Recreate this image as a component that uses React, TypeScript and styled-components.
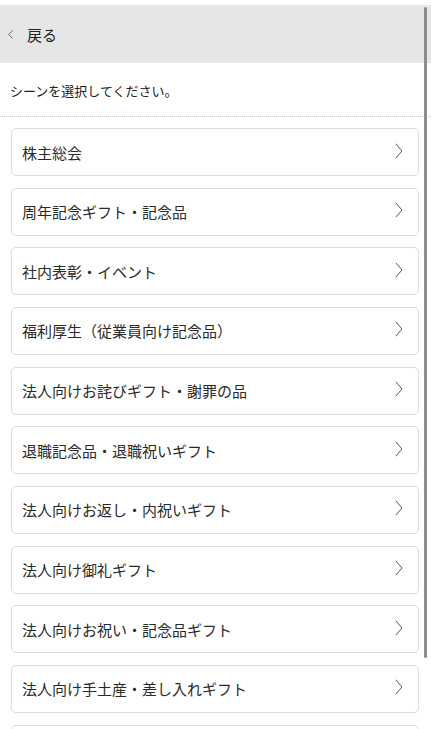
import styled, { createGlobalStyle } from "styled-components";

const GlobalStyle = createGlobalStyle`
  html, body {
    margin: 0;
    padding: 0;
    background: #fff;
  }
  body {
    font-family: "Noto Sans CJK JP", "Noto Sans", sans-serif;
    color: #333;
  }
`;

const scenes = [
  "株主総会",
  "周年記念ギフト・記念品",
  "社内表彰・イベント",
  "福利厚生（従業員向け記念品）",
  "法人向けお詫びギフト・謝罪の品",
  "退職記念品・退職祝いギフト",
  "法人向けお返し・内祝いギフト",
  "法人向け御礼ギフト",
  "法人向けお祝い・記念品ギフト",
  "法人向け手土産・差し入れギフト",
];

const Page = styled.div`
  position: relative;
  height: 729px;
  overflow: hidden;
  padding-top: 5px;
  box-sizing: border-box;
`;

const Header = styled.div`
  height: 58px;
  background: #e6e6e6;
  display: flex;
  align-items: center;
  gap: 14px;
  padding-left: 8px;
`;

const BackLabel = styled.span`
  font-size: 15px;
  color: #222;
  line-height: 1;
`;

const Subtitle = styled.div`
  height: 51px;
  display: flex;
  align-items: center;
  padding: 2px 10px 0;
  font-size: 13px;
  color: #222;
  border-bottom: 1px dotted #c8c8c8;
`;

const List = styled.div`
  display: flex;
  flex-direction: column;
  gap: 11.67px;
  padding: 11px 12px 0 11px;
`;

const Card = styled.div`
  height: 48px;
  box-sizing: border-box;
  border: 1px solid #dcdcdc;
  border-radius: 5px;
  display: flex;
  align-items: center;
  justify-content: space-between;
  padding: 0 15px 0 10px;
  font-size: 15px;
  color: #2a2a2a;
`;

const Chevron = styled.svg`
  flex: none;
  margin-top: -3px;
`;

const ScrollThumb = styled.div`
  position: absolute;
  top: 7px;
  right: 4px;
  width: 3px;
  height: 651px;
  border-radius: 2px;
  background: #8c8c8c;
`;

const App = () => {
  return (
    <Page>
      <GlobalStyle />
      <Header>
        <svg width="5" height="9" viewBox="0 0 5 9">
          <polyline points="4.5,0.5 0.8,4.5 4.5,8.5" fill="none" stroke="#666" strokeWidth="1" />
        </svg>
        <BackLabel>戻る</BackLabel>
      </Header>
      <Subtitle>シーンを選択してください。</Subtitle>
      <List>
        {scenes.map((s) => (
          <Card key={s}>
            <span>{s}</span>
            <Chevron width="8" height="16" viewBox="0 0 8 16">
              <polyline points="0.8,0.8 7,8 0.8,15.2" fill="none" stroke="#555" strokeWidth="1" />
            </Chevron>
          </Card>
        ))}
        <Card aria-hidden="true" />
      </List>
      <ScrollThumb />
    </Page>
  );
};

export default App;
